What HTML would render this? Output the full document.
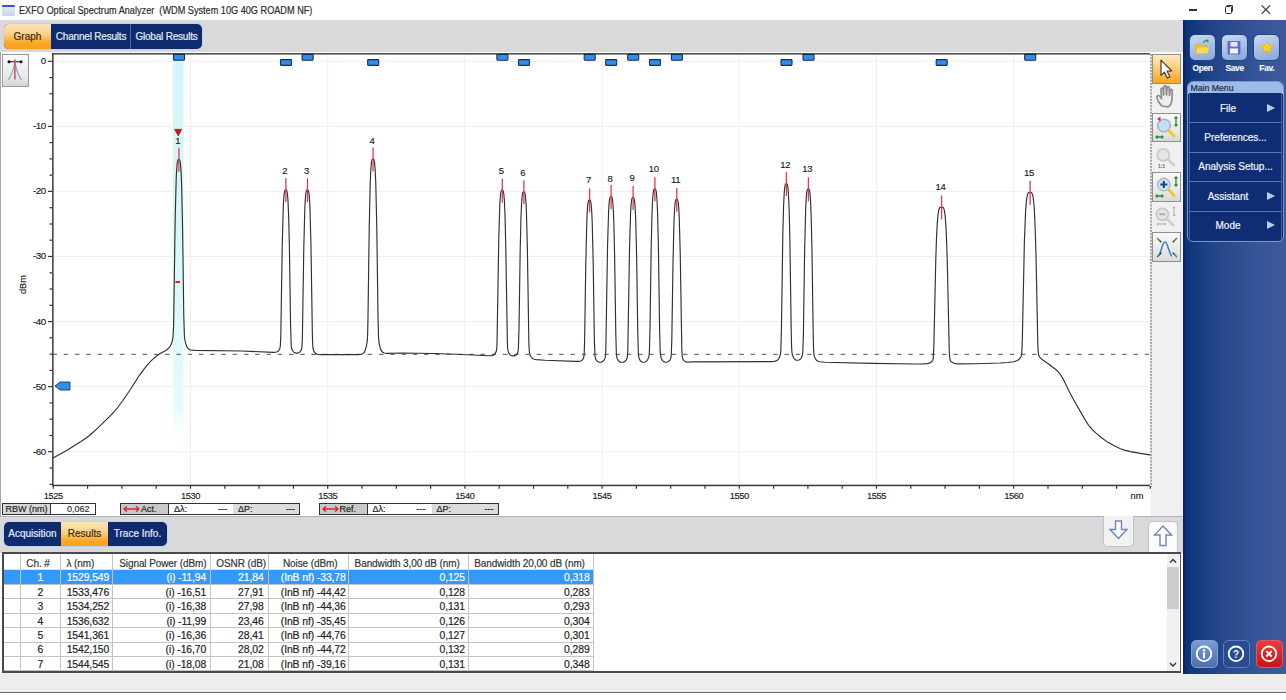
<!DOCTYPE html><html><head><meta charset="utf-8"><style>
*{margin:0;padding:0;box-sizing:border-box}
html,body{width:1286px;height:700px;overflow:hidden;background:#fff;font-family:"Liberation Sans",sans-serif;color:#222}
.a{position:absolute}
.t{position:absolute;white-space:nowrap;-webkit-text-stroke:0.18px currentColor}
svg text{stroke:currentColor;stroke-width:0.15px}
</style></head><body>
<div class="a" style="left:1.5px;top:4.5px;width:13px;height:11px;border-radius:1px;background:linear-gradient(#3448c0 0,#4a5fd0 2.5px,#dfe8f0 2.5px,#c8d4ee 11px)"></div>
<div class="t" style="left:18.8px;top:3.6px;font-size:10px;line-height:14px;color:#2b2b2b;white-space:pre;transform:scaleX(0.915);transform-origin:0 0">EXFO Optical Spectrum Analyzer  (WDM System 10G 40G ROADM NF)</div>
<div class="a" style="left:1188.7px;top:9.3px;width:8.2px;height:1.3px;background:#333"></div>
<div class="a" style="left:1224.5px;top:6.3px;width:7.5px;height:7.5px;border:1.2px solid #333;border-radius:1.5px"></div>
<div class="a" style="left:1226.3px;top:4.8px;width:7px;height:7px;border-top:1.2px solid #333;border-right:1.2px solid #333;border-radius:1.5px"></div>
<svg class="a" style="left:1261px;top:5px" width="10" height="10"><path d="M0.6 0.4 L9.1 8.9 M9.1 0.4 L0.6 8.9" stroke="#333" stroke-width="1.15"/></svg>
<div class="a" style="left:0;top:20px;width:1183px;height:32px;background:#d9d9d9"></div>
<div class="a" style="left:3px;top:22.5px;width:200px;height:27px;border-radius:6px;background:#c3d2ea"></div>
<div class="a" style="left:4px;top:23.5px;width:198px;height:25px;border-radius:5px;overflow:hidden;background:#0e2b6d"><div class="a" style="left:0;top:0;width:47px;height:25px;background:linear-gradient(#fbe3b8 0%,#fbd28a 40%,#f9a825 75%,#f7a21c 100%)"></div><div class="a" style="left:126px;top:0;width:1px;height:25px;background:#4d6aa6"></div></div>
<div class="t" style="left:4px;top:23.5px;width:47px;height:25px;font-size:10px;line-height:25px;text-align:center;color:#3a2a10">Graph</div>
<div class="t" style="left:51px;top:23.5px;width:80px;height:25px;font-size:10px;line-height:25px;text-align:center;color:#e8eefa;letter-spacing:-0.2px">Channel Results</div>
<div class="t" style="left:131px;top:23.5px;width:71px;height:25px;font-size:10px;line-height:25px;text-align:center;color:#e8eefa;letter-spacing:-0.2px">Global Results</div>
<div class="a" style="left:0;top:52px;width:1183px;height:464px;background:#fff"></div>
<div class="a" style="left:0;top:52px;width:1px;height:464px;background:#a8a8a8"></div>
<div class="a" style="left:1151px;top:54px;width:32px;height:462px;background:#f0f0f0"></div>
<svg width="1286" height="520" viewBox="0 0 1286 520" style="position:absolute;left:0;top:0" font-family="Liberation Sans">
<line x1="54" y1="61.3" x2="1150" y2="61.3" stroke="#efefef" stroke-width="1"/>
<line x1="54" y1="126.4" x2="1150" y2="126.4" stroke="#efefef" stroke-width="1"/>
<line x1="54" y1="191.4" x2="1150" y2="191.4" stroke="#efefef" stroke-width="1"/>
<line x1="54" y1="256.5" x2="1150" y2="256.5" stroke="#efefef" stroke-width="1"/>
<line x1="54" y1="321.6" x2="1150" y2="321.6" stroke="#efefef" stroke-width="1"/>
<line x1="54" y1="386.6" x2="1150" y2="386.6" stroke="#efefef" stroke-width="1"/>
<line x1="54" y1="451.7" x2="1150" y2="451.7" stroke="#efefef" stroke-width="1"/>
<line x1="190.5" y1="55" x2="190.5" y2="484" stroke="#efefef" stroke-width="1"/>
<line x1="327.7" y1="55" x2="327.7" y2="484" stroke="#efefef" stroke-width="1"/>
<line x1="464.9" y1="55" x2="464.9" y2="484" stroke="#efefef" stroke-width="1"/>
<line x1="602.1" y1="55" x2="602.1" y2="484" stroke="#efefef" stroke-width="1"/>
<line x1="739.3" y1="55" x2="739.3" y2="484" stroke="#efefef" stroke-width="1"/>
<line x1="876.5" y1="55" x2="876.5" y2="484" stroke="#efefef" stroke-width="1"/>
<line x1="1013.7" y1="55" x2="1013.7" y2="484" stroke="#efefef" stroke-width="1"/>
<defs><linearGradient id="cy" x1="0" y1="0" x2="0" y2="1"><stop offset="0" stop-color="#d3f5f9"/><stop offset="0.6" stop-color="#dcf8fb"/><stop offset="0.88" stop-color="#e6fafc"/><stop offset="1" stop-color="#ffffff" stop-opacity="0"/></linearGradient></defs>
<rect x="173" y="55" width="10.5" height="400" fill="url(#cy)"/>
<line x1="52.5" y1="354.4" x2="1150" y2="354.4" stroke="#5d7b96" stroke-width="1.2" stroke-dasharray="4.5 6.76"/>
<path d="M53.0 458.0 66.2 450.8 80.6 441.8 85.8 438.2 90.4 434.7 98.0 427.9 111.2 414.8 114.8 410.9 118.0 407.0 122.8 400.5 130.2 389.7 139.4 375.3 144.2 368.8 148.0 364.2 152.4 359.6 156.6 356.0 160.2 353.6 166.2 350.2 168.0 348.8 169.8 346.9 171.2 344.3 172.2 341.2 173.0 337.2 173.6 325.6 175.2 217.5 176.2 178.8 176.6 170.5 177.2 163.3 177.8 160.3 178.2 159.6 178.8 159.5 179.4 159.6 179.8 160.3 180.4 163.3 181.0 170.5 181.6 184.3 182.6 229.0 183.8 316.2 184.4 336.1 184.8 339.5 185.6 343.1 186.6 346.1 187.6 347.9 188.6 349.0 190.0 349.8 192.0 350.2 195.0 350.4 241.4 351.0 273.6 352.4 275.8 352.2 277.2 351.8 278.4 350.9 279.4 349.5 280.0 348.0 280.4 345.2 280.8 335.4 282.2 247.6 283.2 209.2 283.6 200.9 284.2 193.7 284.8 190.7 285.2 190.1 285.8 189.9 286.4 190.1 286.8 190.7 287.4 193.7 288.0 200.9 288.6 214.7 289.4 247.6 290.6 325.9 291.2 345.6 291.6 348.5 292.0 349.6 293.0 351.3 294.4 352.6 296.2 353.1 298.0 353.1 299.4 352.4 300.6 351.2 301.4 349.6 301.8 348.0 302.2 342.5 302.4 336.0 303.8 247.6 304.8 209.2 305.2 200.9 305.8 193.7 306.4 190.7 306.8 190.1 307.4 189.9 308.0 190.1 308.4 190.7 309.0 193.7 309.6 200.9 310.0 209.3 311.0 247.6 312.4 336.4 312.8 346.6 313.4 350.2 314.4 352.2 315.8 353.6 317.4 354.3 320.0 354.6 358.0 354.6 361.4 354.2 362.6 353.7 363.6 352.9 364.4 351.9 365.2 350.2 366.4 346.2 367.2 341.5 367.6 335.2 368.0 317.5 369.2 228.7 370.2 184.0 370.8 170.1 371.4 162.9 372.0 159.9 372.4 159.2 373.0 159.1 373.6 159.2 374.0 159.9 374.6 162.9 375.2 170.1 375.8 184.0 376.8 228.7 378.0 317.4 378.6 338.8 379.2 343.8 380.6 349.1 382.0 351.6 383.0 352.5 384.0 353.0 386.8 353.4 402.8 353.0 433.6 353.5 456.0 354.2 488.8 355.8 491.2 355.7 492.8 355.4 494.0 354.7 495.0 353.7 495.8 352.4 496.4 350.8 496.8 347.7 497.0 343.9 498.8 237.7 499.8 204.8 500.2 198.0 500.8 192.5 501.4 190.4 501.8 190.1 502.2 190.0 502.8 190.2 503.2 190.8 503.8 193.8 504.4 201.0 505.0 214.8 505.8 247.7 507.4 344.0 507.6 347.8 508.0 350.9 508.6 352.6 509.6 354.3 510.8 355.3 512.4 355.9 514.2 355.9 515.6 355.4 516.6 354.5 517.6 352.9 518.0 351.8 518.4 348.8 519.0 328.6 520.2 249.6 521.0 216.7 521.6 202.9 522.2 195.7 522.8 192.7 523.2 192.1 524.0 191.9 524.4 192.1 524.8 192.7 525.4 195.7 526.0 202.9 526.4 211.3 527.4 249.7 528.8 339.5 529.0 346.4 529.4 352.3 529.8 354.2 530.4 355.7 531.4 357.3 532.6 358.4 534.2 359.2 536.4 359.6 544.8 360.2 575.6 361.4 579.0 361.4 581.0 361.0 581.8 360.5 582.6 359.7 583.6 357.9 584.0 355.8 584.2 353.4 584.6 340.8 585.8 263.1 586.8 222.0 587.4 209.4 588.0 203.1 588.6 200.6 589.0 200.1 589.6 200.0 590.2 200.3 590.6 201.1 591.2 204.7 591.8 212.8 592.2 222.0 593.2 263.2 594.4 341.0 595.0 356.2 595.4 358.3 596.0 359.7 597.0 361.0 598.2 361.9 599.8 362.3 601.6 362.1 603.0 361.3 604.0 360.2 604.8 358.7 605.2 357.4 605.6 354.3 605.8 350.5 607.6 244.3 608.6 211.4 609.0 204.6 609.6 199.1 610.2 197.0 610.6 196.7 611.2 196.6 611.8 197.0 612.2 198.1 612.8 202.2 613.4 211.4 613.8 221.4 614.6 254.3 615.8 333.6 616.4 354.3 616.8 357.4 617.2 358.7 618.2 360.4 619.4 361.6 621.0 362.2 623.0 362.2 624.6 361.6 625.8 360.5 626.6 359.2 627.2 357.6 627.6 354.6 627.8 350.9 629.6 245.3 630.6 212.4 631.0 205.6 631.6 200.1 632.2 198.0 632.6 197.7 633.2 197.6 633.8 198.0 634.2 199.1 634.8 203.2 635.4 212.4 635.8 222.4 636.6 255.3 637.8 334.3 638.4 354.6 639.0 358.3 639.8 359.9 640.6 361.0 641.6 361.7 643.0 362.2 644.4 362.2 645.8 361.7 647.2 360.4 648.4 358.0 649.0 355.9 649.4 352.1 650.0 328.4 651.2 246.8 652.0 213.8 652.6 200.0 653.2 192.7 653.8 189.7 654.2 189.1 654.8 188.9 655.4 189.1 655.8 189.7 656.4 192.7 657.0 200.0 657.6 213.8 658.4 246.8 659.6 328.4 660.2 352.1 660.8 356.8 661.6 359.0 662.4 360.4 663.4 361.4 664.8 362.1 666.4 362.2 668.0 361.8 669.2 361.0 670.2 359.6 670.8 358.2 671.2 356.1 671.8 340.6 673.0 262.5 674.0 221.3 674.6 208.7 675.2 202.4 675.8 199.9 676.2 199.4 676.8 199.3 677.2 199.4 677.6 199.9 678.2 202.4 678.8 208.7 679.2 216.3 680.2 251.8 681.8 348.7 682.2 356.1 682.6 358.2 683.4 359.9 684.2 360.9 685.2 361.6 686.2 362.0 687.6 362.1 694.0 361.8 770.2 361.6 774.2 361.4 776.4 360.9 778.0 359.7 779.4 357.5 780.4 354.3 780.8 351.1 781.4 330.6 782.8 236.3 783.6 205.6 784.2 193.1 784.8 186.7 785.4 184.2 785.8 183.7 786.4 183.6 787.0 183.9 787.4 184.7 788.0 188.3 788.6 196.5 789.2 211.6 790.0 247.1 791.2 330.5 791.6 347.2 792.0 352.8 792.4 354.8 793.6 357.8 795.0 359.5 796.2 360.2 797.6 360.3 799.0 360.0 800.2 359.3 801.2 358.0 802.0 356.3 802.4 355.0 802.8 352.3 803.4 333.9 804.6 252.3 805.6 210.9 806.2 198.4 806.8 192.0 807.4 189.5 807.8 189.0 808.4 188.9 809.0 189.2 809.4 190.0 810.0 193.6 810.6 201.7 811.2 216.9 812.0 252.3 813.2 334.1 813.6 349.5 814.0 354.6 814.4 356.4 815.4 358.8 816.8 360.6 818.0 361.3 819.4 361.7 825.0 362.2 872.8 363.4 913.6 364.0 923.0 363.9 927.2 363.6 930.0 362.9 931.2 362.1 932.2 361.2 932.8 360.2 933.2 358.5 933.8 348.8 935.8 259.1 936.4 240.7 937.2 224.2 938.0 214.7 938.8 209.8 939.2 208.6 939.8 207.6 940.4 207.2 941.6 207.0 942.6 207.2 943.4 207.8 944.0 209.1 944.4 210.7 945.2 216.5 946.0 227.6 946.8 246.2 947.4 266.6 949.2 348.8 949.6 356.7 950.2 360.2 950.6 361.0 951.4 361.8 953.4 363.0 955.8 363.6 959.6 363.9 975.8 363.7 1000.4 363.0 1007.8 362.5 1013.6 361.8 1016.8 360.8 1019.0 359.4 1020.8 357.1 1021.2 356.2 1021.6 354.2 1022.0 348.9 1022.4 336.6 1024.4 241.1 1025.6 211.2 1026.4 200.9 1027.4 194.8 1028.0 193.3 1028.6 192.6 1029.6 192.4 1031.0 192.5 1031.6 192.8 1032.2 193.7 1032.8 195.6 1033.2 197.8 1034.0 205.3 1034.6 214.8 1035.4 234.6 1036.0 256.3 1037.8 343.4 1038.2 351.6 1038.6 354.7 1039.0 355.9 1040.2 357.7 1042.4 359.8 1049.0 364.2 1055.4 369.2 1058.0 371.7 1060.4 374.5 1063.2 379.1 1069.2 391.5 1073.8 400.0 1085.6 420.6 1088.0 424.4 1090.0 427.0 1092.8 430.1 1096.0 433.1 1102.2 438.2 1107.6 442.1 1114.6 446.0 1120.4 448.7 1124.4 450.1 1130.4 451.6 1141.8 453.6 1150.0 454.9" fill="none" stroke="#303030" stroke-width="1.15" stroke-linejoin="round"/>
<rect x="52" y="53" width="1098" height="1.6" fill="#505050"/>
<rect x="52.1" y="53" width="1.5" height="433" fill="#3a3a3a"/>
<rect x="52" y="484.7" width="1098" height="1.5" fill="#3a3a3a"/>
<line x1="1151" y1="54" x2="1151" y2="487" stroke="#555" stroke-width="1" stroke-dasharray="2 1.2"/>
<line x1="48.0" y1="61.3" x2="52" y2="61.3" stroke="#333" stroke-width="1.2"/>
<line x1="49.5" y1="77.6" x2="52" y2="77.6" stroke="#333" stroke-width="1.2"/>
<line x1="49.5" y1="93.8" x2="52" y2="93.8" stroke="#333" stroke-width="1.2"/>
<line x1="49.5" y1="110.1" x2="52" y2="110.1" stroke="#333" stroke-width="1.2"/>
<line x1="48.0" y1="126.4" x2="52" y2="126.4" stroke="#333" stroke-width="1.2"/>
<line x1="49.5" y1="142.6" x2="52" y2="142.6" stroke="#333" stroke-width="1.2"/>
<line x1="49.5" y1="158.9" x2="52" y2="158.9" stroke="#333" stroke-width="1.2"/>
<line x1="49.5" y1="175.2" x2="52" y2="175.2" stroke="#333" stroke-width="1.2"/>
<line x1="48.0" y1="191.4" x2="52" y2="191.4" stroke="#333" stroke-width="1.2"/>
<line x1="49.5" y1="207.7" x2="52" y2="207.7" stroke="#333" stroke-width="1.2"/>
<line x1="49.5" y1="224.0" x2="52" y2="224.0" stroke="#333" stroke-width="1.2"/>
<line x1="49.5" y1="240.2" x2="52" y2="240.2" stroke="#333" stroke-width="1.2"/>
<line x1="48.0" y1="256.5" x2="52" y2="256.5" stroke="#333" stroke-width="1.2"/>
<line x1="49.5" y1="272.8" x2="52" y2="272.8" stroke="#333" stroke-width="1.2"/>
<line x1="49.5" y1="289.0" x2="52" y2="289.0" stroke="#333" stroke-width="1.2"/>
<line x1="49.5" y1="305.3" x2="52" y2="305.3" stroke="#333" stroke-width="1.2"/>
<line x1="48.0" y1="321.6" x2="52" y2="321.6" stroke="#333" stroke-width="1.2"/>
<line x1="49.5" y1="337.8" x2="52" y2="337.8" stroke="#333" stroke-width="1.2"/>
<line x1="49.5" y1="354.1" x2="52" y2="354.1" stroke="#333" stroke-width="1.2"/>
<line x1="49.5" y1="370.4" x2="52" y2="370.4" stroke="#333" stroke-width="1.2"/>
<line x1="48.0" y1="386.6" x2="52" y2="386.6" stroke="#333" stroke-width="1.2"/>
<line x1="49.5" y1="402.9" x2="52" y2="402.9" stroke="#333" stroke-width="1.2"/>
<line x1="49.5" y1="419.2" x2="52" y2="419.2" stroke="#333" stroke-width="1.2"/>
<line x1="49.5" y1="435.5" x2="52" y2="435.5" stroke="#333" stroke-width="1.2"/>
<line x1="48.0" y1="451.7" x2="52" y2="451.7" stroke="#333" stroke-width="1.2"/>
<line x1="49.5" y1="468.0" x2="52" y2="468.0" stroke="#333" stroke-width="1.2"/>
<line x1="49.5" y1="484.3" x2="52" y2="484.3" stroke="#333" stroke-width="1.2"/>
<line x1="53.3" y1="486" x2="53.3" y2="488.8" stroke="#333" stroke-width="1.2"/>
<line x1="87.6" y1="486" x2="87.6" y2="488.8" stroke="#333" stroke-width="1.2"/>
<line x1="121.9" y1="486" x2="121.9" y2="488.8" stroke="#333" stroke-width="1.2"/>
<line x1="156.2" y1="486" x2="156.2" y2="488.8" stroke="#333" stroke-width="1.2"/>
<line x1="190.5" y1="486" x2="190.5" y2="488.8" stroke="#333" stroke-width="1.2"/>
<line x1="224.8" y1="486" x2="224.8" y2="488.8" stroke="#333" stroke-width="1.2"/>
<line x1="259.1" y1="486" x2="259.1" y2="488.8" stroke="#333" stroke-width="1.2"/>
<line x1="293.4" y1="486" x2="293.4" y2="488.8" stroke="#333" stroke-width="1.2"/>
<line x1="327.7" y1="486" x2="327.7" y2="488.8" stroke="#333" stroke-width="1.2"/>
<line x1="362.0" y1="486" x2="362.0" y2="488.8" stroke="#333" stroke-width="1.2"/>
<line x1="396.3" y1="486" x2="396.3" y2="488.8" stroke="#333" stroke-width="1.2"/>
<line x1="430.6" y1="486" x2="430.6" y2="488.8" stroke="#333" stroke-width="1.2"/>
<line x1="464.9" y1="486" x2="464.9" y2="488.8" stroke="#333" stroke-width="1.2"/>
<line x1="499.2" y1="486" x2="499.2" y2="488.8" stroke="#333" stroke-width="1.2"/>
<line x1="533.5" y1="486" x2="533.5" y2="488.8" stroke="#333" stroke-width="1.2"/>
<line x1="567.8" y1="486" x2="567.8" y2="488.8" stroke="#333" stroke-width="1.2"/>
<line x1="602.1" y1="486" x2="602.1" y2="488.8" stroke="#333" stroke-width="1.2"/>
<line x1="636.4" y1="486" x2="636.4" y2="488.8" stroke="#333" stroke-width="1.2"/>
<line x1="670.7" y1="486" x2="670.7" y2="488.8" stroke="#333" stroke-width="1.2"/>
<line x1="705.0" y1="486" x2="705.0" y2="488.8" stroke="#333" stroke-width="1.2"/>
<line x1="739.3" y1="486" x2="739.3" y2="488.8" stroke="#333" stroke-width="1.2"/>
<line x1="773.6" y1="486" x2="773.6" y2="488.8" stroke="#333" stroke-width="1.2"/>
<line x1="807.9" y1="486" x2="807.9" y2="488.8" stroke="#333" stroke-width="1.2"/>
<line x1="842.2" y1="486" x2="842.2" y2="488.8" stroke="#333" stroke-width="1.2"/>
<line x1="876.5" y1="486" x2="876.5" y2="488.8" stroke="#333" stroke-width="1.2"/>
<line x1="910.8" y1="486" x2="910.8" y2="488.8" stroke="#333" stroke-width="1.2"/>
<line x1="945.1" y1="486" x2="945.1" y2="488.8" stroke="#333" stroke-width="1.2"/>
<line x1="979.4" y1="486" x2="979.4" y2="488.8" stroke="#333" stroke-width="1.2"/>
<line x1="1013.7" y1="486" x2="1013.7" y2="488.8" stroke="#333" stroke-width="1.2"/>
<line x1="1048.0" y1="486" x2="1048.0" y2="488.8" stroke="#333" stroke-width="1.2"/>
<line x1="1082.3" y1="486" x2="1082.3" y2="488.8" stroke="#333" stroke-width="1.2"/>
<line x1="1116.6" y1="486" x2="1116.6" y2="488.8" stroke="#333" stroke-width="1.2"/>
<line x1="1150.3" y1="486" x2="1150.3" y2="488.8" stroke="#333" stroke-width="1.2"/>
<text x="45.8" y="64.2" text-anchor="end" font-size="9.8" letter-spacing="-0.45" fill="#222">0</text>
<text x="45.8" y="129.3" text-anchor="end" font-size="9.8" letter-spacing="-0.45" fill="#222">-10</text>
<text x="45.8" y="194.3" text-anchor="end" font-size="9.8" letter-spacing="-0.45" fill="#222">-20</text>
<text x="45.8" y="259.4" text-anchor="end" font-size="9.8" letter-spacing="-0.45" fill="#222">-30</text>
<text x="45.8" y="324.5" text-anchor="end" font-size="9.8" letter-spacing="-0.45" fill="#222">-40</text>
<text x="45.8" y="389.5" text-anchor="end" font-size="9.8" letter-spacing="-0.45" fill="#222">-50</text>
<text x="45.8" y="454.6" text-anchor="end" font-size="9.8" letter-spacing="-0.45" fill="#222">-60</text>
<text x="53.3" y="499" text-anchor="middle" font-size="9.3" letter-spacing="-0.4" fill="#222">1525</text>
<text x="190.5" y="499" text-anchor="middle" font-size="9.3" letter-spacing="-0.4" fill="#222">1530</text>
<text x="327.7" y="499" text-anchor="middle" font-size="9.3" letter-spacing="-0.4" fill="#222">1535</text>
<text x="464.9" y="499" text-anchor="middle" font-size="9.3" letter-spacing="-0.4" fill="#222">1540</text>
<text x="602.1" y="499" text-anchor="middle" font-size="9.3" letter-spacing="-0.4" fill="#222">1545</text>
<text x="739.3" y="499" text-anchor="middle" font-size="9.3" letter-spacing="-0.4" fill="#222">1550</text>
<text x="876.5" y="499" text-anchor="middle" font-size="9.3" letter-spacing="-0.4" fill="#222">1555</text>
<text x="1013.7" y="499" text-anchor="middle" font-size="9.3" letter-spacing="-0.4" fill="#222">1560</text>
<text x="1137" y="499" text-anchor="middle" font-size="9.3" fill="#222">nm</text>
<text x="0" y="0" transform="translate(25.8 284.5) rotate(-90)" text-anchor="middle" font-size="9.3" fill="#222">dBm</text>
<line x1="178.9" y1="147.8" x2="178.9" y2="171.8" stroke="#e23a48" stroke-width="1.3"/>
<text x="177.8" y="144.0" text-anchor="middle" font-size="9.5" letter-spacing="-0.3" fill="#222">1</text>
<line x1="285.9" y1="178.3" x2="285.9" y2="202.3" stroke="#e23a48" stroke-width="1.3"/>
<text x="284.8" y="174.0" text-anchor="middle" font-size="9.5" letter-spacing="-0.3" fill="#222">2</text>
<line x1="307.5" y1="178.3" x2="307.5" y2="202.3" stroke="#e23a48" stroke-width="1.3"/>
<text x="306.4" y="174.0" text-anchor="middle" font-size="9.5" letter-spacing="-0.3" fill="#222">3</text>
<line x1="373.1" y1="147.4" x2="373.1" y2="171.4" stroke="#e23a48" stroke-width="1.3"/>
<text x="372.0" y="144.0" text-anchor="middle" font-size="9.5" letter-spacing="-0.3" fill="#222">4</text>
<line x1="502.3" y1="178.4" x2="502.3" y2="202.4" stroke="#e23a48" stroke-width="1.3"/>
<text x="501.2" y="174.0" text-anchor="middle" font-size="9.5" letter-spacing="-0.3" fill="#222">5</text>
<line x1="523.9" y1="180.3" x2="523.9" y2="204.3" stroke="#e23a48" stroke-width="1.3"/>
<text x="522.8" y="176.0" text-anchor="middle" font-size="9.5" letter-spacing="-0.3" fill="#222">6</text>
<line x1="589.6" y1="188.4" x2="589.6" y2="212.4" stroke="#e23a48" stroke-width="1.3"/>
<text x="588.5" y="183.0" text-anchor="middle" font-size="9.5" letter-spacing="-0.3" fill="#222">7</text>
<line x1="611.1" y1="185.0" x2="611.1" y2="209.0" stroke="#e23a48" stroke-width="1.3"/>
<text x="610.0" y="182.0" text-anchor="middle" font-size="9.5" letter-spacing="-0.3" fill="#222">8</text>
<line x1="633.1" y1="186.0" x2="633.1" y2="210.0" stroke="#e23a48" stroke-width="1.3"/>
<text x="632.0" y="181.0" text-anchor="middle" font-size="9.5" letter-spacing="-0.3" fill="#222">9</text>
<line x1="654.9" y1="177.3" x2="654.9" y2="201.3" stroke="#e23a48" stroke-width="1.3"/>
<text x="653.8" y="172.0" text-anchor="middle" font-size="9.5" letter-spacing="-0.3" fill="#222">10</text>
<line x1="676.8" y1="187.7" x2="676.8" y2="211.7" stroke="#e23a48" stroke-width="1.3"/>
<text x="675.7" y="183.0" text-anchor="middle" font-size="9.5" letter-spacing="-0.3" fill="#222">11</text>
<line x1="786.4" y1="172.0" x2="786.4" y2="196.0" stroke="#e23a48" stroke-width="1.3"/>
<text x="785.3" y="168.0" text-anchor="middle" font-size="9.5" letter-spacing="-0.3" fill="#222">12</text>
<line x1="808.4" y1="177.3" x2="808.4" y2="201.3" stroke="#e23a48" stroke-width="1.3"/>
<text x="807.3" y="171.5" text-anchor="middle" font-size="9.5" letter-spacing="-0.3" fill="#222">13</text>
<line x1="941.6" y1="195.5" x2="941.6" y2="219.5" stroke="#e23a48" stroke-width="1.3"/>
<text x="940.5" y="190.0" text-anchor="middle" font-size="9.5" letter-spacing="-0.3" fill="#222">14</text>
<line x1="1030.1" y1="180.8" x2="1030.1" y2="204.8" stroke="#e23a48" stroke-width="1.3"/>
<text x="1029.0" y="176.0" text-anchor="middle" font-size="9.5" letter-spacing="-0.3" fill="#222">15</text>
<path d="M174.5 129.3 L181.8 129.3 L178.2 136 Z" fill="#d0101a" stroke="#8a0000" stroke-width="0.5"/>
<rect x="175.5" y="281" width="4.5" height="2" fill="#e02020"/>
<rect x="173.5" y="54.4" width="11" height="5.8" rx="0.6" fill="#2f8ee6" stroke="#1a2c55" stroke-width="1.1"/>
<rect x="280.5" y="59.6" width="11" height="5.8" rx="0.6" fill="#2f8ee6" stroke="#1a2c55" stroke-width="1.1"/>
<rect x="302.1" y="54.4" width="11" height="5.8" rx="0.6" fill="#2f8ee6" stroke="#1a2c55" stroke-width="1.1"/>
<rect x="367.7" y="59.6" width="11" height="5.8" rx="0.6" fill="#2f8ee6" stroke="#1a2c55" stroke-width="1.1"/>
<rect x="496.9" y="54.4" width="11" height="5.8" rx="0.6" fill="#2f8ee6" stroke="#1a2c55" stroke-width="1.1"/>
<rect x="518.5" y="59.6" width="11" height="5.8" rx="0.6" fill="#2f8ee6" stroke="#1a2c55" stroke-width="1.1"/>
<rect x="584.2" y="54.4" width="11" height="5.8" rx="0.6" fill="#2f8ee6" stroke="#1a2c55" stroke-width="1.1"/>
<rect x="605.7" y="59.6" width="11" height="5.8" rx="0.6" fill="#2f8ee6" stroke="#1a2c55" stroke-width="1.1"/>
<rect x="627.7" y="54.4" width="11" height="5.8" rx="0.6" fill="#2f8ee6" stroke="#1a2c55" stroke-width="1.1"/>
<rect x="649.5" y="59.6" width="11" height="5.8" rx="0.6" fill="#2f8ee6" stroke="#1a2c55" stroke-width="1.1"/>
<rect x="671.4" y="54.4" width="11" height="5.8" rx="0.6" fill="#2f8ee6" stroke="#1a2c55" stroke-width="1.1"/>
<rect x="781.0" y="59.6" width="11" height="5.8" rx="0.6" fill="#2f8ee6" stroke="#1a2c55" stroke-width="1.1"/>
<rect x="803.0" y="54.4" width="11" height="5.8" rx="0.6" fill="#2f8ee6" stroke="#1a2c55" stroke-width="1.1"/>
<rect x="936.2" y="59.6" width="11" height="5.8" rx="0.6" fill="#2f8ee6" stroke="#1a2c55" stroke-width="1.1"/>
<rect x="1024.7" y="54.4" width="11" height="5.8" rx="0.6" fill="#2f8ee6" stroke="#1a2c55" stroke-width="1.1"/>
<path d="M55 386 L60 382 L70 382 L70 390 L60 390 Z" fill="#2f8ee6" stroke="#1b3560" stroke-width="0.9"/>
</svg>
<div class="a" style="left:2px;top:53.5px;width:27px;height:33px;border:1px solid #9a9a9a;background:linear-gradient(#fafafa,#e9e9e9 70%,#d6d6d6)"></div>
<svg class="a" style="left:2px;top:53.5px" width="27" height="33"><path d="M7 7.7 L19 7.7" stroke="#333" stroke-width="1.2"/><circle cx="7" cy="7.7" r="1.5" fill="#111"/><circle cx="19" cy="7.7" r="1.5" fill="#111"/><path d="M6.2 26 C9.5 22 11.5 15 12.9 8.5 C14.3 15 16.3 22 19.6 26" fill="none" stroke="#86aede" stroke-width="1.2"/><line x1="12.9" y1="5.5" x2="12.9" y2="25.5" stroke="#e0505a" stroke-width="1.6"/></svg>
<div class="a" style="left:2px;top:502.5px;width:94px;height:12px;border:1px solid #333;background:#fff;overflow:hidden"><div class="t" style="left:0px;top:0;width:47px;height:10px;background:#d8d8d8;font-size:9px;line-height:10px;text-align:center;color:#222">RBW (nm)</div><div class="t" style="left:47px;top:0;width:1px;height:10px;background:#333;font-size:9px;line-height:10px;text-align:left;color:#222"></div><div class="t" style="left:48px;top:0;width:38.5px;height:10px;background:#fff;font-size:9px;line-height:10px;text-align:right;color:#333">0,062</div></div>
<div class="a" style="left:120px;top:502.5px;width:180px;height:12px;border:1px solid #333;background:#fff;overflow:hidden"><div class="t" style="left:0px;top:0;width:47px;height:10px;background:#c9c9c9;font-size:9px;line-height:10px;text-align:center;color:#222"></div><div class="t" style="left:47px;top:0;width:1px;height:10px;background:#333;font-size:9px;line-height:10px;text-align:left;color:#222"></div><div class="t" style="left:53px;top:0;width:60px;height:10px;background:#fff;font-size:9px;line-height:10px;text-align:left;color:#222">&Delta;&lambda;:</div><div class="t" style="left:86px;top:0;width:20px;height:10px;background:#fff;font-size:9px;line-height:10px;text-align:right;color:#222">---</div><div class="t" style="left:112px;top:0;width:66px;height:10px;background:#dcdcdc;font-size:9px;line-height:10px;text-align:left;color:#222">&nbsp;&nbsp;&Delta;P:</div><div class="t" style="left:150px;top:0;width:24px;height:10px;background:#dcdcdc;font-size:9px;line-height:10px;text-align:right;color:#222">---</div></div>
<svg class="a" style="left:122px;top:503.5px" width="20" height="10"><path d="M2 5 L17 5 M5 2.3 L2 5 L5 7.7 M14 2.3 L17 5 L14 7.7" fill="none" stroke="#e0203a" stroke-width="1.3"/></svg>
<div class="t" style="left:141px;top:503.5px;font-size:9px;line-height:10px;color:#222">Act.</div>
<div class="a" style="left:318.5px;top:502.5px;width:180px;height:12px;border:1px solid #333;background:#fff;overflow:hidden"><div class="t" style="left:0px;top:0;width:47px;height:10px;background:#c9c9c9;font-size:9px;line-height:10px;text-align:center;color:#222"></div><div class="t" style="left:47px;top:0;width:1px;height:10px;background:#333;font-size:9px;line-height:10px;text-align:left;color:#222"></div><div class="t" style="left:53px;top:0;width:60px;height:10px;background:#fff;font-size:9px;line-height:10px;text-align:left;color:#222">&Delta;&lambda;:</div><div class="t" style="left:86px;top:0;width:20px;height:10px;background:#fff;font-size:9px;line-height:10px;text-align:right;color:#222">---</div><div class="t" style="left:112px;top:0;width:66px;height:10px;background:#dcdcdc;font-size:9px;line-height:10px;text-align:left;color:#222">&nbsp;&nbsp;&Delta;P:</div><div class="t" style="left:150px;top:0;width:24px;height:10px;background:#dcdcdc;font-size:9px;line-height:10px;text-align:right;color:#222">---</div></div>
<svg class="a" style="left:320.5px;top:503.5px" width="20" height="10"><path d="M2 5 L17 5 M5 2.3 L2 5 L5 7.7 M14 2.3 L17 5 L14 7.7" fill="none" stroke="#e0203a" stroke-width="1.3"/></svg>
<div class="t" style="left:339.5px;top:503.5px;font-size:9px;line-height:10px;color:#222">Ref.</div>
<div class="a" style="left:0;top:516px;width:1183px;height:37px;background:#d9d9d9;border-top:1px solid #aab3c3"></div>
<div class="a" style="left:3px;top:520.5px;width:165px;height:26.5px;border-radius:6px;background:#c3d2ea"></div>
<div class="a" style="left:4px;top:521.5px;width:163px;height:24.5px;border-radius:5px;overflow:hidden;background:#0e2b6d"><div class="a" style="left:57px;top:0;width:47px;height:25px;background:linear-gradient(#fbe3b8 0%,#fbd28a 40%,#f9a825 75%,#f7a21c 100%)"></div></div>
<div class="t" style="left:4px;top:521.5px;width:57px;height:24.5px;font-size:10px;line-height:24.5px;text-align:center;color:#e8eefa">Acquisition</div>
<div class="t" style="left:61px;top:521.5px;width:47px;height:24.5px;font-size:10px;line-height:24.5px;text-align:center;color:#3a2a10">Results</div>
<div class="t" style="left:108px;top:521.5px;width:59px;height:24.5px;font-size:10px;line-height:24.5px;text-align:center;color:#e8eefa">Trace Info.</div>
<div class="a" style="left:1103px;top:516px;width:31px;height:30.5px;border:1px solid #b9c3d3;border-top:none;border-radius:0 0 5px 5px;background:#f2f2f2"></div>
<svg class="a" style="left:1103px;top:516px" width="31" height="31"><path d="M12.5 5 L18.5 5 L18.5 13.5 L24 13.5 L15.5 22.5 L7 13.5 L12.5 13.5 Z" fill="#fff" stroke="#6f87b3" stroke-width="1.4" stroke-linejoin="miter"/></svg>
<div class="a" style="left:1148px;top:520.5px;width:30px;height:32.5px;border:1px solid #b9c3d3;border-bottom:none;border-radius:5px 5px 0 0;background:#fbfbfb"></div>
<svg class="a" style="left:1148px;top:520.5px" width="30" height="32"><path d="M15 5 L23.5 14 L18 14 L18 24.5 L12 24.5 L12 14 L6.5 14 Z" fill="#fff" stroke="#6f87b3" stroke-width="1.4"/></svg>
<div class="a" style="left:2px;top:552px;width:1179px;height:120.5px;border:2px solid #4a4a4a;border-right:1px solid #555;background:#fff"></div>
<div class="a" style="left:4px;top:570.0px;width:589.5px;height:14.4px;background:#3399ff"></div>
<div class="a" style="left:4px;top:583.9px;width:589.5px;height:1px;background:#c4c4c4"></div>
<div class="a" style="left:4px;top:598.3px;width:589.5px;height:1px;background:#c4c4c4"></div>
<div class="a" style="left:4px;top:612.7px;width:589.5px;height:1px;background:#c4c4c4"></div>
<div class="a" style="left:4px;top:627.1px;width:589.5px;height:1px;background:#c4c4c4"></div>
<div class="a" style="left:4px;top:641.5px;width:589.5px;height:1px;background:#c4c4c4"></div>
<div class="a" style="left:4px;top:655.9px;width:589.5px;height:1px;background:#c4c4c4"></div>
<div class="a" style="left:4px;top:670.3px;width:589.5px;height:1px;background:#c4c4c4"></div>
<div class="a" style="left:4px;top:569.2px;width:589.5px;height:1px;background:#e0e0e0"></div>
<div class="a" style="left:20.0px;top:554px;width:1px;height:117px;background:#c4c4c4"></div>
<div class="a" style="left:60.0px;top:554px;width:1px;height:117px;background:#c4c4c4"></div>
<div class="a" style="left:112.1px;top:554px;width:1px;height:117px;background:#c4c4c4"></div>
<div class="a" style="left:210.0px;top:554px;width:1px;height:117px;background:#c4c4c4"></div>
<div class="a" style="left:267.5px;top:554px;width:1px;height:117px;background:#c4c4c4"></div>
<div class="a" style="left:348.1px;top:554px;width:1px;height:117px;background:#c4c4c4"></div>
<div class="a" style="left:468.0px;top:554px;width:1px;height:117px;background:#c4c4c4"></div>
<div class="a" style="left:593.0px;top:554px;width:1px;height:117px;background:#c4c4c4"></div>
<div class="t" style="left:26.3px;top:555.5px;height:16px;font-size:10.0px;line-height:16px;color:#333;letter-spacing:-0.1px">Ch. #</div>
<div class="t" style="left:66.4px;top:555.5px;height:16px;font-size:10.0px;line-height:16px;color:#333;letter-spacing:-0.1px">&lambda; (nm)</div>
<div class="t" style="left:119.3px;top:555.5px;height:16px;font-size:10.0px;line-height:16px;color:#333;letter-spacing:-0.1px">Signal Power (dBm)</div>
<div class="t" style="left:216.3px;top:555.5px;height:16px;font-size:10.0px;line-height:16px;color:#333;letter-spacing:-0.1px">OSNR (dB)</div>
<div class="t" style="left:283.0px;top:555.5px;height:16px;font-size:10.0px;line-height:16px;color:#333;letter-spacing:-0.1px">Noise (dBm)</div>
<div class="t" style="left:354.6px;top:555.5px;height:16px;font-size:10.0px;line-height:16px;color:#333;letter-spacing:-0.1px">Bandwidth 3,00 dB (nm)</div>
<div class="t" style="left:474.3px;top:555.5px;height:16px;font-size:10.0px;line-height:16px;color:#333;letter-spacing:-0.1px">Bandwidth 20,00 dB (nm)</div>
<div class="t" style="left:20.5px;top:571.3px;width:40.0px;height:14.4px;font-size:10.4px;line-height:14.4px;text-align:center;color:#fff">1</div>
<div class="t" style="left:60.5px;top:571.3px;width:52.1px;height:14.4px;padding-right:3.4px;font-size:10.4px;line-height:14.4px;text-align:right;color:#fff;letter-spacing:-0.1px">1529,549</div>
<div class="t" style="left:112.6px;top:571.3px;width:97.9px;height:14.4px;padding-right:4.3px;font-size:10.4px;line-height:14.4px;text-align:right;color:#fff;letter-spacing:-0.1px">(i) -11,94</div>
<div class="t" style="left:210.5px;top:571.3px;width:57.5px;height:14.4px;padding-right:4.4px;font-size:10.4px;line-height:14.4px;text-align:right;color:#fff;letter-spacing:-0.1px">21,84</div>
<div class="t" style="left:268.0px;top:571.3px;width:80.6px;height:14.4px;padding-right:2.9px;font-size:10.4px;line-height:14.4px;text-align:right;color:#fff;letter-spacing:-0.1px">(InB nf) -33,78</div>
<div class="t" style="left:348.6px;top:571.3px;width:119.9px;height:14.4px;padding-right:3.5px;font-size:10.4px;line-height:14.4px;text-align:right;color:#fff;letter-spacing:-0.1px">0,125</div>
<div class="t" style="left:468.5px;top:571.3px;width:125.0px;height:14.4px;padding-right:3.9px;font-size:10.4px;line-height:14.4px;text-align:right;color:#fff;letter-spacing:-0.1px">0,318</div>
<div class="t" style="left:20.5px;top:585.7px;width:40.0px;height:14.4px;font-size:10.4px;line-height:14.4px;text-align:center;color:#222">2</div>
<div class="t" style="left:60.5px;top:585.7px;width:52.1px;height:14.4px;padding-right:3.4px;font-size:10.4px;line-height:14.4px;text-align:right;color:#222;letter-spacing:-0.1px">1533,476</div>
<div class="t" style="left:112.6px;top:585.7px;width:97.9px;height:14.4px;padding-right:4.3px;font-size:10.4px;line-height:14.4px;text-align:right;color:#222;letter-spacing:-0.1px">(i) -16,51</div>
<div class="t" style="left:210.5px;top:585.7px;width:57.5px;height:14.4px;padding-right:4.4px;font-size:10.4px;line-height:14.4px;text-align:right;color:#222;letter-spacing:-0.1px">27,91</div>
<div class="t" style="left:268.0px;top:585.7px;width:80.6px;height:14.4px;padding-right:2.9px;font-size:10.4px;line-height:14.4px;text-align:right;color:#222;letter-spacing:-0.1px">(InB nf) -44,42</div>
<div class="t" style="left:348.6px;top:585.7px;width:119.9px;height:14.4px;padding-right:3.5px;font-size:10.4px;line-height:14.4px;text-align:right;color:#222;letter-spacing:-0.1px">0,128</div>
<div class="t" style="left:468.5px;top:585.7px;width:125.0px;height:14.4px;padding-right:3.9px;font-size:10.4px;line-height:14.4px;text-align:right;color:#222;letter-spacing:-0.1px">0,283</div>
<div class="t" style="left:20.5px;top:600.1px;width:40.0px;height:14.4px;font-size:10.4px;line-height:14.4px;text-align:center;color:#222">3</div>
<div class="t" style="left:60.5px;top:600.1px;width:52.1px;height:14.4px;padding-right:3.4px;font-size:10.4px;line-height:14.4px;text-align:right;color:#222;letter-spacing:-0.1px">1534,252</div>
<div class="t" style="left:112.6px;top:600.1px;width:97.9px;height:14.4px;padding-right:4.3px;font-size:10.4px;line-height:14.4px;text-align:right;color:#222;letter-spacing:-0.1px">(i) -16,38</div>
<div class="t" style="left:210.5px;top:600.1px;width:57.5px;height:14.4px;padding-right:4.4px;font-size:10.4px;line-height:14.4px;text-align:right;color:#222;letter-spacing:-0.1px">27,98</div>
<div class="t" style="left:268.0px;top:600.1px;width:80.6px;height:14.4px;padding-right:2.9px;font-size:10.4px;line-height:14.4px;text-align:right;color:#222;letter-spacing:-0.1px">(InB nf) -44,36</div>
<div class="t" style="left:348.6px;top:600.1px;width:119.9px;height:14.4px;padding-right:3.5px;font-size:10.4px;line-height:14.4px;text-align:right;color:#222;letter-spacing:-0.1px">0,131</div>
<div class="t" style="left:468.5px;top:600.1px;width:125.0px;height:14.4px;padding-right:3.9px;font-size:10.4px;line-height:14.4px;text-align:right;color:#222;letter-spacing:-0.1px">0,293</div>
<div class="t" style="left:20.5px;top:614.5px;width:40.0px;height:14.4px;font-size:10.4px;line-height:14.4px;text-align:center;color:#222">4</div>
<div class="t" style="left:60.5px;top:614.5px;width:52.1px;height:14.4px;padding-right:3.4px;font-size:10.4px;line-height:14.4px;text-align:right;color:#222;letter-spacing:-0.1px">1536,632</div>
<div class="t" style="left:112.6px;top:614.5px;width:97.9px;height:14.4px;padding-right:4.3px;font-size:10.4px;line-height:14.4px;text-align:right;color:#222;letter-spacing:-0.1px">(i) -11,99</div>
<div class="t" style="left:210.5px;top:614.5px;width:57.5px;height:14.4px;padding-right:4.4px;font-size:10.4px;line-height:14.4px;text-align:right;color:#222;letter-spacing:-0.1px">23,46</div>
<div class="t" style="left:268.0px;top:614.5px;width:80.6px;height:14.4px;padding-right:2.9px;font-size:10.4px;line-height:14.4px;text-align:right;color:#222;letter-spacing:-0.1px">(InB nf) -35,45</div>
<div class="t" style="left:348.6px;top:614.5px;width:119.9px;height:14.4px;padding-right:3.5px;font-size:10.4px;line-height:14.4px;text-align:right;color:#222;letter-spacing:-0.1px">0,126</div>
<div class="t" style="left:468.5px;top:614.5px;width:125.0px;height:14.4px;padding-right:3.9px;font-size:10.4px;line-height:14.4px;text-align:right;color:#222;letter-spacing:-0.1px">0,304</div>
<div class="t" style="left:20.5px;top:628.9px;width:40.0px;height:14.4px;font-size:10.4px;line-height:14.4px;text-align:center;color:#222">5</div>
<div class="t" style="left:60.5px;top:628.9px;width:52.1px;height:14.4px;padding-right:3.4px;font-size:10.4px;line-height:14.4px;text-align:right;color:#222;letter-spacing:-0.1px">1541,361</div>
<div class="t" style="left:112.6px;top:628.9px;width:97.9px;height:14.4px;padding-right:4.3px;font-size:10.4px;line-height:14.4px;text-align:right;color:#222;letter-spacing:-0.1px">(i) -16,36</div>
<div class="t" style="left:210.5px;top:628.9px;width:57.5px;height:14.4px;padding-right:4.4px;font-size:10.4px;line-height:14.4px;text-align:right;color:#222;letter-spacing:-0.1px">28,41</div>
<div class="t" style="left:268.0px;top:628.9px;width:80.6px;height:14.4px;padding-right:2.9px;font-size:10.4px;line-height:14.4px;text-align:right;color:#222;letter-spacing:-0.1px">(InB nf) -44,76</div>
<div class="t" style="left:348.6px;top:628.9px;width:119.9px;height:14.4px;padding-right:3.5px;font-size:10.4px;line-height:14.4px;text-align:right;color:#222;letter-spacing:-0.1px">0,127</div>
<div class="t" style="left:468.5px;top:628.9px;width:125.0px;height:14.4px;padding-right:3.9px;font-size:10.4px;line-height:14.4px;text-align:right;color:#222;letter-spacing:-0.1px">0,301</div>
<div class="t" style="left:20.5px;top:643.3px;width:40.0px;height:14.4px;font-size:10.4px;line-height:14.4px;text-align:center;color:#222">6</div>
<div class="t" style="left:60.5px;top:643.3px;width:52.1px;height:14.4px;padding-right:3.4px;font-size:10.4px;line-height:14.4px;text-align:right;color:#222;letter-spacing:-0.1px">1542,150</div>
<div class="t" style="left:112.6px;top:643.3px;width:97.9px;height:14.4px;padding-right:4.3px;font-size:10.4px;line-height:14.4px;text-align:right;color:#222;letter-spacing:-0.1px">(i) -16,70</div>
<div class="t" style="left:210.5px;top:643.3px;width:57.5px;height:14.4px;padding-right:4.4px;font-size:10.4px;line-height:14.4px;text-align:right;color:#222;letter-spacing:-0.1px">28,02</div>
<div class="t" style="left:268.0px;top:643.3px;width:80.6px;height:14.4px;padding-right:2.9px;font-size:10.4px;line-height:14.4px;text-align:right;color:#222;letter-spacing:-0.1px">(InB nf) -44,72</div>
<div class="t" style="left:348.6px;top:643.3px;width:119.9px;height:14.4px;padding-right:3.5px;font-size:10.4px;line-height:14.4px;text-align:right;color:#222;letter-spacing:-0.1px">0,132</div>
<div class="t" style="left:468.5px;top:643.3px;width:125.0px;height:14.4px;padding-right:3.9px;font-size:10.4px;line-height:14.4px;text-align:right;color:#222;letter-spacing:-0.1px">0,289</div>
<div class="t" style="left:20.5px;top:657.7px;width:40.0px;height:14.4px;font-size:10.4px;line-height:14.4px;text-align:center;color:#222">7</div>
<div class="t" style="left:60.5px;top:657.7px;width:52.1px;height:14.4px;padding-right:3.4px;font-size:10.4px;line-height:14.4px;text-align:right;color:#222;letter-spacing:-0.1px">1544,545</div>
<div class="t" style="left:112.6px;top:657.7px;width:97.9px;height:14.4px;padding-right:4.3px;font-size:10.4px;line-height:14.4px;text-align:right;color:#222;letter-spacing:-0.1px">(i) -18,08</div>
<div class="t" style="left:210.5px;top:657.7px;width:57.5px;height:14.4px;padding-right:4.4px;font-size:10.4px;line-height:14.4px;text-align:right;color:#222;letter-spacing:-0.1px">21,08</div>
<div class="t" style="left:268.0px;top:657.7px;width:80.6px;height:14.4px;padding-right:2.9px;font-size:10.4px;line-height:14.4px;text-align:right;color:#222;letter-spacing:-0.1px">(InB nf) -39,16</div>
<div class="t" style="left:348.6px;top:657.7px;width:119.9px;height:14.4px;padding-right:3.5px;font-size:10.4px;line-height:14.4px;text-align:right;color:#222;letter-spacing:-0.1px">0,131</div>
<div class="t" style="left:468.5px;top:657.7px;width:125.0px;height:14.4px;padding-right:3.9px;font-size:10.4px;line-height:14.4px;text-align:right;color:#222;letter-spacing:-0.1px">0,348</div>
<div class="a" style="left:1167px;top:554px;width:12px;height:117px;background:#f0f0f0"></div>
<div class="a" style="left:1167px;top:566.5px;width:12px;height:42px;background:#cdcdcd"></div>
<svg class="a" style="left:1167px;top:555px" width="12" height="12"><path d="M3 7.5 L6 4.5 L9 7.5" fill="none" stroke="#333" stroke-width="1.4"/></svg>
<svg class="a" style="left:1167px;top:658px" width="12" height="12"><path d="M3 5 L6 8 L9 5" fill="none" stroke="#333" stroke-width="1.4"/></svg>
<div class="a" style="left:0;top:672.5px;width:1286px;height:20px;background:#ededed;border-top:1px solid #f6f6f6"></div>
<div class="a" style="left:0;top:691.8px;width:1286px;height:1.2px;background:#666"></div>
<div class="a" style="left:1152px;top:54.0px;width:29px;height:29.5px;border:1px solid #8f8f8f;background:linear-gradient(#fde9c4,#fbcf78 45%,#f8a51c)"></div>
<div class="a" style="left:1152px;top:83.5px;width:29px;height:29.5px;background:#f0f0f0"></div>
<div class="a" style="left:1152px;top:113.0px;width:29px;height:29.3px;border:1px solid #8f8f8f;background:linear-gradient(#f8f8f8,#e6e6e6 70%,#d9d9d9)"></div>
<div class="a" style="left:1152px;top:142.3px;width:29px;height:29.7px;background:#f0f0f0"></div>
<div class="a" style="left:1152px;top:172.0px;width:29px;height:30.0px;border:1px solid #8f8f8f;background:linear-gradient(#f8f8f8,#e6e6e6 70%,#d9d9d9)"></div>
<div class="a" style="left:1152px;top:202.0px;width:29px;height:29.7px;background:#f0f0f0"></div>
<div class="a" style="left:1152px;top:231.7px;width:29px;height:30.3px;border:1px solid #8f8f8f;background:linear-gradient(#f8f8f8,#e6e6e6 70%,#d9d9d9)"></div>
<svg class="a" style="left:0;top:0" width="1286" height="300"><path transform="translate(1161 60.2) scale(0.98)" d="M0 0 L0 15.5 L3.6 12.2 L6.4 18.2 L9 17 L6.3 11.2 L11 11 Z" fill="#fff" stroke="#3a3a3a" stroke-width="1.2" stroke-linejoin="round"/><path d="M1162 106 C1159 103 1157 99 1157 97 C1157 95 1159 95 1160.5 97 L1161.5 98.5 L1161 89.5 C1161 87.5 1163 87.5 1163.2 89.5 L1163.6 95 L1163.8 87 C1164 85 1166 85 1166.2 87 L1166.5 95 L1167 88 C1167.2 86 1169.2 86 1169.3 88 L1169.4 95.5 L1170.2 90.5 C1170.5 88.8 1172.3 89 1172.3 91 L1172 99 C1171.8 103 1170 106 1168 107 Z" fill="#ececec" stroke="#8c8c8c" stroke-width="1.7" stroke-linejoin="round"/><circle cx="1164" cy="125.5" r="6.3" fill="#bfe3f5" stroke="#b9a9c9" stroke-width="1.6"/><path d="M1157 119 L1160.5 116.5 L1160.5 121.5 Z" fill="#e02828"/><path d="M1169 131 L1174 136" stroke="#f0c820" stroke-width="3" stroke-linecap="round"/><path d="M1176 117 L1176 126 M1174.5 118.5 L1176 117 L1177.5 118.5 M1174.5 124.5 L1176 126 L1177.5 124.5" stroke="#2f8a3a" stroke-width="1.3" fill="none"/><path d="M1156 137 L1163 137 M1157.5 135.5 L1156 137 L1157.5 138.5 M1161.5 135.5 L1163 137 L1161.5 138.5" stroke="#2f8a3a" stroke-width="1.3" fill="none"/><circle cx="1163.3" cy="154.9" r="6" fill="#e6e6e6" stroke="#c9c9c9" stroke-width="1.8"/><path d="M1168 159.5 L1174 165" stroke="#cfcfcf" stroke-width="2.6" stroke-linecap="round"/><text x="1158" y="168" font-size="5" fill="#999" font-family="Liberation Sans">1:1</text><circle cx="1163.8" cy="184.6" r="6.2" fill="#c9e8f7" stroke="#b9bcc9" stroke-width="1.6"/><path d="M1160.3 184.6 L1167.3 184.6 M1163.8 181.1 L1163.8 188.1" stroke="#1a3f8a" stroke-width="2"/><path d="M1169 190 L1174 195.5" stroke="#f0c820" stroke-width="3" stroke-linecap="round"/><path d="M1176 177 L1176 186 M1174.5 178.5 L1176 177 L1177.5 178.5 M1174.5 184.5 L1176 186 L1177.5 184.5" stroke="#2f8a3a" stroke-width="1.3" fill="none"/><path d="M1156 196 L1163 196 M1157.5 194.5 L1156 196 L1157.5 197.5 M1161.5 194.5 L1163 196 L1161.5 197.5" stroke="#2f8a3a" stroke-width="1.3" fill="none"/><circle cx="1162.4" cy="214.3" r="6" fill="#e6e6e6" stroke="#c9c9c9" stroke-width="1.8"/><path d="M1159.4 214.3 L1165.4 214.3" stroke="#aaa" stroke-width="2"/><path d="M1167 219 L1173 225" stroke="#cfcfcf" stroke-width="2.6" stroke-linecap="round"/><path d="M1174 207 L1174 216 M1172.8 208.2 L1174 207 L1175.2 208.2 M1172.8 214.8 L1174 216 L1175.2 214.8" stroke="#aaa" stroke-width="1" fill="none"/><path d="M1157 224 L1166 224 M1158.2 222.8 L1157 224 L1158.2 225.2 M1164.8 222.8 L1166 224 L1164.8 225.2" stroke="#aaa" stroke-width="1" fill="none"/><path d="M1158 256 C1161 255 1162 242 1165 242 C1168 242 1169 255 1172 256" fill="none" stroke="#3a7fd0" stroke-width="1.6"/><path d="M1157 238 L1161 242 M1177 238 L1173 242 M1157 257 L1161 253 M1177 257 L1173 253" stroke="#2f8a3a" stroke-width="1.4"/><path d="M1159.5 242 L1161.5 242.5 L1161 240.5 Z M1174.5 242 L1172.5 242.5 L1173 240.5 Z M1159.5 253 L1161.5 252.5 L1161 254.5 Z M1174.5 253 L1172.5 252.5 L1173 254.5 Z" fill="#222"/></svg>
<div class="a" style="left:1183px;top:20px;width:103px;height:653.5px;background:linear-gradient(90deg,#0b2f78 0%,#12397f 10%,#1f4287 25%,#2c4c8f 50%,#36559a 75%,#3d5a9a 100%)"></div>
<div class="a" style="left:1183px;top:20px;width:1.5px;height:653.5px;background:#082560"></div>
<div class="a" style="left:1190px;top:34.7px;width:25.3px;height:25.5px;border-radius:5px;box-shadow:0 0 0 1px #26427f;background:linear-gradient(160deg,#c8daf2 0%,#a9c3ea 45%,#86a6d8 100%)"></div>
<div class="t" style="left:1186.6px;top:62.5px;width:32px;font-size:8.4px;line-height:10px;text-align:center;color:#f4f6fb;font-weight:bold;letter-spacing:-0.3px">Open</div>
<div class="a" style="left:1222px;top:34.7px;width:25.3px;height:25.5px;border-radius:5px;box-shadow:0 0 0 1px #26427f;background:linear-gradient(160deg,#c8daf2 0%,#a9c3ea 45%,#86a6d8 100%)"></div>
<div class="t" style="left:1218.6px;top:62.5px;width:32px;font-size:8.4px;line-height:10px;text-align:center;color:#f4f6fb;font-weight:bold;letter-spacing:-0.3px">Save</div>
<div class="a" style="left:1254.2px;top:34.7px;width:25.3px;height:25.5px;border-radius:5px;box-shadow:0 0 0 1px #26427f;background:linear-gradient(160deg,#c8daf2 0%,#a9c3ea 45%,#86a6d8 100%)"></div>
<div class="t" style="left:1250.8px;top:62.5px;width:32px;font-size:8.4px;line-height:10px;text-align:center;color:#f4f6fb;font-weight:bold;letter-spacing:-0.3px">Fav.</div>
<svg class="a" style="left:1183px;top:30px" width="103" height="35"><path d="M13 14 L17.5 14 L19 16 L24.5 16 L24.5 23.5 L13 23.5 Z" fill="#f0c030" stroke="#d9a21a" stroke-width="0.6"/><path d="M14.5 17.5 L26 17.5 L24.5 23.5 L13 23.5 Z" fill="#ffd84a"/><path d="M20 13 C21.5 10.5 23.5 10 25 11" fill="none" stroke="#3a9a4a" stroke-width="1.4"/><path d="M24 9 L26 11.5 L23.5 12.5 Z" fill="#3a9a4a"/><rect x="45" y="11.5" width="12" height="12.5" fill="#6b6fc9" stroke="#4a4fa0" stroke-width="0.6"/><rect x="47.5" y="12" width="7" height="4.5" fill="#e6e9fb"/><rect x="47" y="18.5" width="8" height="5" fill="#f2f2fb"/><path d="M84 11 L85.9 15.3 L90.5 15.6 L87 18.6 L88.1 23.2 L84 20.7 L79.9 23.2 L81 18.6 L77.5 15.6 L82.1 15.3 Z" fill="#ffd21a" stroke="#e6a800" stroke-width="0.6"/></svg>
<div class="a" style="left:1187px;top:81px;width:96.5px;height:160.5px;border:1px solid #7d97c8;border-radius:6px;background:#0f2f77;overflow:hidden"><div class="a" style="left:0;top:0;width:100%;height:12px;background:#9dbbe6"></div></div>
<div class="t" style="left:1190.5px;top:81.5px;font-size:8.7px;line-height:12px;color:#1a2a48">Main Menu</div>
<div class="a" style="left:1188.5px;top:93.0px;width:93.5px;height:29.4px;background:#0e2d74;border-left:1px solid #3f5f9f;border-right:1px solid #3f5f9f;border-top:none"></div>
<div class="t" style="left:1183.0px;top:93.5px;width:90px;height:29.4px;font-size:10px;line-height:29.4px;text-align:center;color:#f2f5fc;-webkit-text-stroke:0.2px #f2f5fc">File</div>
<svg class="a" style="left:1266px;top:102.8px" width="10" height="10"><path d="M1 1 L9 5 L1 9 Z" fill="#b9cdf0"/></svg>
<div class="a" style="left:1188.5px;top:122.3px;width:93.5px;height:29.4px;background:#0e2d74;border-left:1px solid #3f5f9f;border-right:1px solid #3f5f9f;border-top:1.5px solid #5878b5"></div>
<div class="t" style="left:1190.5px;top:122.8px;width:90px;height:29.4px;font-size:10px;line-height:29.4px;text-align:center;color:#f2f5fc;-webkit-text-stroke:0.2px #f2f5fc">Preferences...</div>
<div class="a" style="left:1188.5px;top:151.8px;width:93.5px;height:29.4px;background:#0e2d74;border-left:1px solid #3f5f9f;border-right:1px solid #3f5f9f;border-top:1.5px solid #5878b5"></div>
<div class="t" style="left:1190.5px;top:152.3px;width:90px;height:29.4px;font-size:10px;line-height:29.4px;text-align:center;color:#f2f5fc;-webkit-text-stroke:0.2px #f2f5fc">Analysis Setup...</div>
<div class="a" style="left:1188.5px;top:181.2px;width:93.5px;height:29.4px;background:#0e2d74;border-left:1px solid #3f5f9f;border-right:1px solid #3f5f9f;border-top:1.5px solid #5878b5"></div>
<div class="t" style="left:1183.0px;top:181.7px;width:90px;height:29.4px;font-size:10px;line-height:29.4px;text-align:center;color:#f2f5fc;-webkit-text-stroke:0.2px #f2f5fc">Assistant</div>
<svg class="a" style="left:1266px;top:191.0px" width="10" height="10"><path d="M1 1 L9 5 L1 9 Z" fill="#b9cdf0"/></svg>
<div class="a" style="left:1188.5px;top:210.6px;width:93.5px;height:29.4px;background:#0e2d74;border-left:1px solid #3f5f9f;border-right:1px solid #3f5f9f;border-top:1.5px solid #5878b5"></div>
<div class="t" style="left:1183.0px;top:211.1px;width:90px;height:29.4px;font-size:10px;line-height:29.4px;text-align:center;color:#f2f5fc;-webkit-text-stroke:0.2px #f2f5fc">Mode</div>
<svg class="a" style="left:1266px;top:220.4px" width="10" height="10"><path d="M1 1 L9 5 L1 9 Z" fill="#b9cdf0"/></svg>
<div class="a" style="left:1190.5px;top:640px;width:27px;height:27.5px;border-radius:5px;background:linear-gradient(#7d9bd3,#4d6fb0);border:1px solid #7f9cd3"></div>
<div class="a" style="left:1222.5px;top:640px;width:27px;height:27.5px;border-radius:5px;background:#294b91;border:1px solid #5d7dbd"></div>
<div class="a" style="left:1255.5px;top:640px;width:27px;height:27.5px;border-radius:5px;background:linear-gradient(#ee3b3b,#c81414);border:1px solid #d65a6a"></div>
<svg class="a" style="left:1183px;top:640px" width="103" height="28"><circle cx="21" cy="13.8" r="7.3" fill="none" stroke="#fff" stroke-width="1.8"/><circle cx="21" cy="10.2" r="1.2" fill="#fff"/><rect x="19.9" y="12.3" width="2.2" height="6" fill="#fff"/><circle cx="53" cy="13.8" r="7.3" fill="none" stroke="#fff" stroke-width="1.8"/><text x="53" y="17.6" text-anchor="middle" font-size="10.5" font-weight="bold" fill="#fff" font-family="Liberation Sans">?</text><circle cx="86" cy="13.8" r="7.3" fill="none" stroke="#fff" stroke-width="1.8"/><path d="M83.3 11.1 L88.7 16.5 M88.7 11.1 L83.3 16.5" stroke="#fff" stroke-width="2"/></svg>
</body></html>
